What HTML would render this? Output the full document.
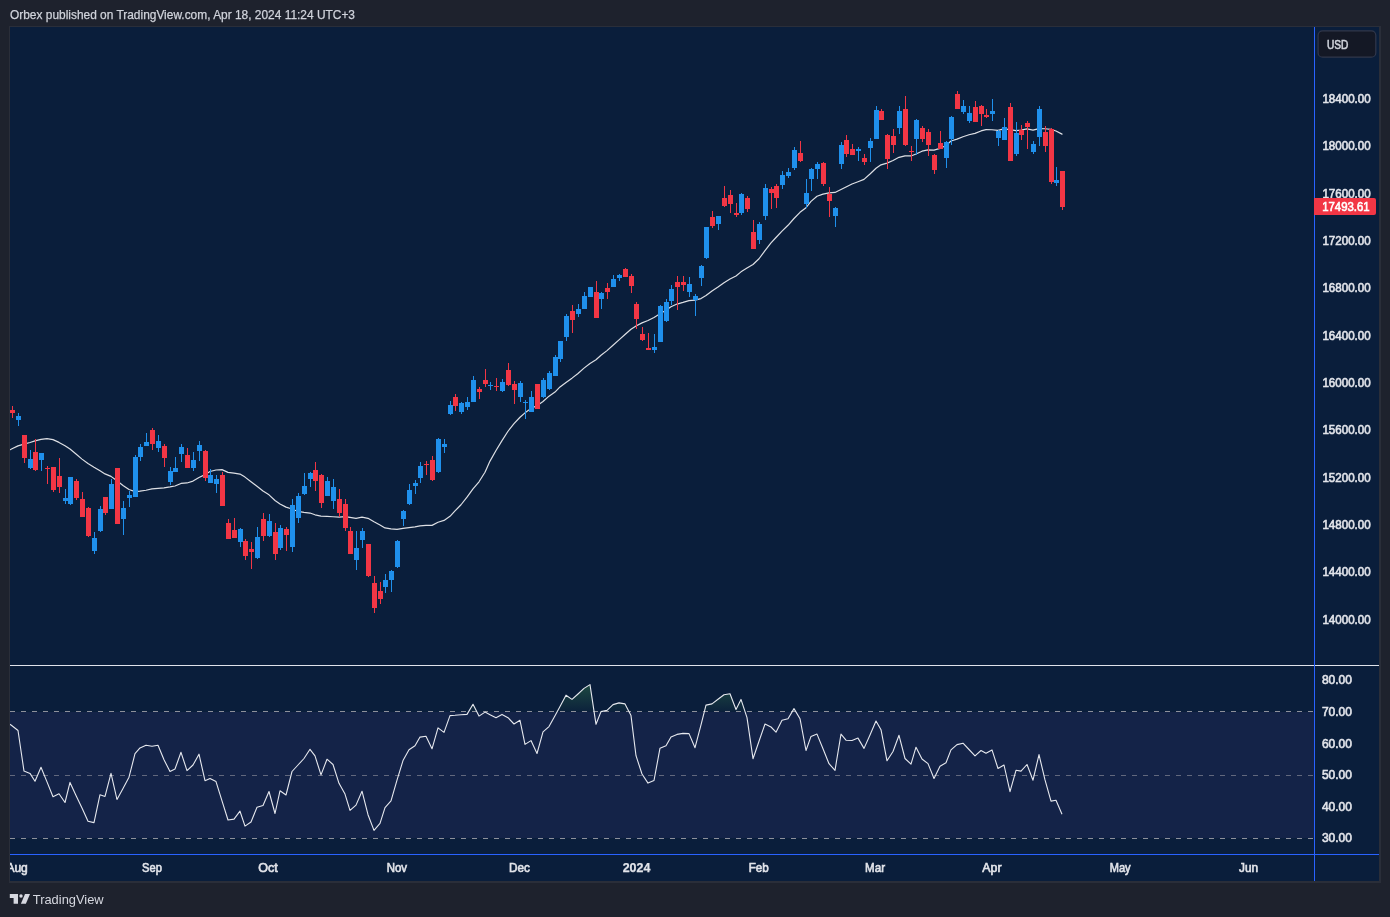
<!DOCTYPE html>
<html><head><meta charset="utf-8"><title>Chart</title>
<style>html,body{margin:0;padding:0;background:#1e222d;}body{width:1390px;height:917px;overflow:hidden;font-family:"Liberation Sans",sans-serif;}svg{display:block;}text{font-family:"Liberation Sans",sans-serif;}</style>
</head><body>
<svg width="1390" height="917" viewBox="0 0 1390 917">
<defs>
<linearGradient id="ob" gradientUnits="userSpaceOnUse" x1="0" y1="680" x2="0" y2="712"><stop offset="0" stop-color="#4caf50" stop-opacity="0.34"/><stop offset="1" stop-color="#4caf50" stop-opacity="0.02"/></linearGradient>
<clipPath id="above70"><rect x="10" y="666" width="1304" height="45.5"/></clipPath>
<clipPath id="main"><rect x="10" y="27" width="1304" height="638"/></clipPath>
<clipPath id="rsi"><rect x="10" y="666" width="1304" height="188"/></clipPath>
<clipPath id="taxis"><rect x="10" y="855" width="1304" height="26"/></clipPath>
<mask id="gm" maskUnits="userSpaceOnUse" x="0" y="0" width="1390" height="917"><rect x="0" y="0" width="1390" height="917" fill="#fff"/></mask>
</defs>
<g mask="url(#gm)">
<rect x="0" y="0" width="1390" height="917" fill="#1e222d"/>
<rect x="9" y="26" width="1372" height="857" fill="#2a2e39" shape-rendering="crispEdges"/>
<rect x="10" y="27" width="1369" height="854" fill="#0a1e3b" shape-rendering="crispEdges"/>
<text x="10" y="19" font-size="12.5" fill="#d0d3db" textLength="345" lengthAdjust="spacingAndGlyphs" stroke="#d0d3db" stroke-width="0.25">Orbex published on TradingView.com, Apr 18, 2024 11:24 UTC+3</text>
<rect x="10" y="712" width="1304" height="126" fill="#142348" shape-rendering="crispEdges"/>
<path d="M10,711.5 L10.0,724.3 L12.0,725.8 L18.0,730.5 L24.0,771.1 L30.0,773.4 L35.0,781.2 L41.0,767.3 L47.0,781.9 L53.0,796.7 L59.0,793.8 L65.0,802.5 L70.0,782.4 L76.0,795.4 L82.0,807.9 L88.0,821.2 L94.0,822.6 L100.0,794.7 L105.0,796.4 L111.0,773.4 L117.0,799.5 L123.0,788.6 L129.0,777.2 L135.0,753.7 L140.0,747.9 L146.0,745.3 L152.0,746.3 L158.0,745.3 L164.0,759.8 L170.0,771.5 L175.0,769.0 L181.0,752.3 L187.0,770.6 L193.0,765.0 L199.0,754.2 L205.0,780.7 L210.0,778.4 L216.0,781.6 L222.0,800.8 L228.0,820.0 L234.0,819.1 L240.0,811.2 L245.0,826.1 L251.0,822.0 L257.0,807.2 L263.0,805.5 L269.0,791.5 L275.0,813.5 L280.0,790.8 L286.0,795.0 L292.0,771.5 L298.0,765.0 L304.0,758.5 L310.0,749.3 L315.0,755.9 L321.0,774.9 L327.0,759.2 L333.0,764.5 L339.0,783.3 L345.0,794.1 L350.0,810.4 L356.0,805.1 L362.0,791.2 L368.0,814.7 L374.0,830.4 L380.0,823.4 L385.0,807.7 L391.0,800.8 L397.0,780.2 L403.0,760.6 L409.0,749.7 L415.0,745.8 L420.0,737.1 L426.0,736.2 L432.0,748.8 L438.0,727.9 L444.0,732.4 L450.0,715.6 L455.0,715.3 L461.0,714.8 L467.0,714.4 L473.0,704.3 L479.0,716.1 L485.0,712.1 L490.0,714.7 L496.0,717.7 L502.0,714.4 L508.0,717.7 L514.0,724.0 L520.0,720.3 L525.0,744.4 L531.0,740.6 L537.0,753.5 L543.0,731.8 L549.0,726.6 L555.0,715.8 L560.0,706.4 L566.0,695.2 L572.0,699.4 L578.0,694.0 L584.0,688.4 L590.0,684.6 L596.0,724.3 L601.0,711.6 L607.0,710.4 L613.0,704.6 L619.0,702.9 L625.0,703.9 L631.0,715.6 L636.0,755.7 L642.0,774.0 L648.0,783.1 L654.0,780.5 L660.0,748.2 L666.0,745.8 L671.0,736.9 L677.0,734.4 L683.0,733.4 L689.0,733.6 L695.0,747.7 L701.0,724.9 L706.0,705.1 L712.0,703.9 L718.0,699.3 L724.0,694.7 L730.0,693.8 L736.0,709.5 L741.0,699.4 L747.0,717.7 L753.0,758.7 L759.0,741.3 L765.0,724.0 L771.0,727.0 L776.0,732.2 L782.0,720.3 L788.0,718.7 L794.0,708.6 L800.0,718.7 L806.0,750.5 L811.0,736.4 L817.0,734.1 L823.0,748.7 L829.0,763.7 L835.0,770.4 L841.0,734.1 L846.0,740.2 L852.0,740.5 L858.0,738.1 L864.0,748.4 L870.0,735.0 L876.0,721.0 L881.0,729.7 L887.0,760.8 L893.0,751.5 L899.0,735.3 L905.0,758.5 L911.0,764.1 L916.0,747.2 L922.0,759.0 L928.0,763.6 L934.0,778.5 L940.0,766.3 L946.0,762.8 L951.0,749.9 L957.0,744.6 L963.0,743.2 L969.0,749.5 L975.0,755.8 L981.0,750.5 L986.0,753.2 L992.0,749.9 L998.0,768.5 L1004.0,765.0 L1010.0,791.6 L1016.0,770.3 L1021.0,771.1 L1027.0,764.5 L1033.0,780.2 L1039.0,754.6 L1045.0,779.9 L1051.0,801.1 L1056.0,800.3 L1062.0,814.2 L1062.0,711.5 Z" fill="url(#ob)" clip-path="url(#above70)"/>
<path d="M10,711.5 H1314" stroke="#8d909b" stroke-width="1" stroke-dasharray="5 6" fill="none" shape-rendering="crispEdges"/>
<path d="M10,775.5 H1314" stroke="#62687d" stroke-width="1" stroke-dasharray="5 6" fill="none" shape-rendering="crispEdges"/>
<path d="M10,838.5 H1314" stroke="#8d909b" stroke-width="1" stroke-dasharray="5 6" fill="none" shape-rendering="crispEdges"/>
<path d="M10.0,724.3 L12.0,725.8 L18.0,730.5 L24.0,771.1 L30.0,773.4 L35.0,781.2 L41.0,767.3 L47.0,781.9 L53.0,796.7 L59.0,793.8 L65.0,802.5 L70.0,782.4 L76.0,795.4 L82.0,807.9 L88.0,821.2 L94.0,822.6 L100.0,794.7 L105.0,796.4 L111.0,773.4 L117.0,799.5 L123.0,788.6 L129.0,777.2 L135.0,753.7 L140.0,747.9 L146.0,745.3 L152.0,746.3 L158.0,745.3 L164.0,759.8 L170.0,771.5 L175.0,769.0 L181.0,752.3 L187.0,770.6 L193.0,765.0 L199.0,754.2 L205.0,780.7 L210.0,778.4 L216.0,781.6 L222.0,800.8 L228.0,820.0 L234.0,819.1 L240.0,811.2 L245.0,826.1 L251.0,822.0 L257.0,807.2 L263.0,805.5 L269.0,791.5 L275.0,813.5 L280.0,790.8 L286.0,795.0 L292.0,771.5 L298.0,765.0 L304.0,758.5 L310.0,749.3 L315.0,755.9 L321.0,774.9 L327.0,759.2 L333.0,764.5 L339.0,783.3 L345.0,794.1 L350.0,810.4 L356.0,805.1 L362.0,791.2 L368.0,814.7 L374.0,830.4 L380.0,823.4 L385.0,807.7 L391.0,800.8 L397.0,780.2 L403.0,760.6 L409.0,749.7 L415.0,745.8 L420.0,737.1 L426.0,736.2 L432.0,748.8 L438.0,727.9 L444.0,732.4 L450.0,715.6 L455.0,715.3 L461.0,714.8 L467.0,714.4 L473.0,704.3 L479.0,716.1 L485.0,712.1 L490.0,714.7 L496.0,717.7 L502.0,714.4 L508.0,717.7 L514.0,724.0 L520.0,720.3 L525.0,744.4 L531.0,740.6 L537.0,753.5 L543.0,731.8 L549.0,726.6 L555.0,715.8 L560.0,706.4 L566.0,695.2 L572.0,699.4 L578.0,694.0 L584.0,688.4 L590.0,684.6 L596.0,724.3 L601.0,711.6 L607.0,710.4 L613.0,704.6 L619.0,702.9 L625.0,703.9 L631.0,715.6 L636.0,755.7 L642.0,774.0 L648.0,783.1 L654.0,780.5 L660.0,748.2 L666.0,745.8 L671.0,736.9 L677.0,734.4 L683.0,733.4 L689.0,733.6 L695.0,747.7 L701.0,724.9 L706.0,705.1 L712.0,703.9 L718.0,699.3 L724.0,694.7 L730.0,693.8 L736.0,709.5 L741.0,699.4 L747.0,717.7 L753.0,758.7 L759.0,741.3 L765.0,724.0 L771.0,727.0 L776.0,732.2 L782.0,720.3 L788.0,718.7 L794.0,708.6 L800.0,718.7 L806.0,750.5 L811.0,736.4 L817.0,734.1 L823.0,748.7 L829.0,763.7 L835.0,770.4 L841.0,734.1 L846.0,740.2 L852.0,740.5 L858.0,738.1 L864.0,748.4 L870.0,735.0 L876.0,721.0 L881.0,729.7 L887.0,760.8 L893.0,751.5 L899.0,735.3 L905.0,758.5 L911.0,764.1 L916.0,747.2 L922.0,759.0 L928.0,763.6 L934.0,778.5 L940.0,766.3 L946.0,762.8 L951.0,749.9 L957.0,744.6 L963.0,743.2 L969.0,749.5 L975.0,755.8 L981.0,750.5 L986.0,753.2 L992.0,749.9 L998.0,768.5 L1004.0,765.0 L1010.0,791.6 L1016.0,770.3 L1021.0,771.1 L1027.0,764.5 L1033.0,780.2 L1039.0,754.6 L1045.0,779.9 L1051.0,801.1 L1056.0,800.3 L1062.0,814.2" fill="none" stroke="#e6e8ee" stroke-width="1.1" stroke-linejoin="round" clip-path="url(#rsi)"/>
<path d="M10.0,449.80 L12.0,448.80 L18.0,445.85 L24.0,444.10 L30.0,442.49 L35.0,440.93 L41.0,439.34 L47.0,438.63 L53.0,439.61 L59.0,442.41 L65.0,445.79 L70.0,449.07 L76.0,453.93 L82.0,459.12 L88.0,463.52 L94.0,467.27 L100.0,470.75 L105.0,473.90 L111.0,476.37 L117.0,480.78 L123.0,485.40 L129.0,489.55 L135.0,491.60 L140.0,491.10 L146.0,490.25 L152.0,488.95 L158.0,488.35 L164.0,487.80 L170.0,486.90 L175.0,486.00 L181.0,483.45 L187.0,482.95 L193.0,481.10 L199.0,477.55 L205.0,474.65 L210.0,471.50 L216.0,470.00 L222.0,469.65 L228.0,472.35 L234.0,473.05 L240.0,474.10 L245.0,477.10 L251.0,481.80 L257.0,486.30 L263.0,490.95 L269.0,494.85 L275.0,500.45 L280.0,504.00 L286.0,507.15 L292.0,509.00 L298.0,511.45 L304.0,512.40 L310.0,513.05 L315.0,514.80 L321.0,516.05 L327.0,516.35 L333.0,516.75 L339.0,517.10 L345.0,516.55 L350.0,517.35 L356.0,518.30 L362.0,517.10 L368.0,518.30 L374.0,521.80 L380.0,524.95 L385.0,527.90 L391.0,528.80 L397.0,529.45 L403.0,528.30 L409.0,527.55 L415.0,526.90 L420.0,525.90 L426.0,525.45 L432.0,525.40 L438.0,522.25 L444.0,520.40 L450.0,516.30 L455.0,510.95 L461.0,504.75 L467.0,497.20 L473.0,488.80 L479.0,481.80 L485.0,472.20 L490.0,461.10 L496.0,450.50 L502.0,440.60 L508.0,431.25 L514.0,423.65 L520.0,417.25 L525.0,412.85 L531.0,408.55 L537.0,405.65 L543.0,401.45 L549.0,396.15 L555.0,392.05 L560.0,386.90 L566.0,382.45 L572.0,378.15 L578.0,373.45 L584.0,368.15 L590.0,363.50 L596.0,359.80 L601.0,355.30 L607.0,350.60 L613.0,345.25 L619.0,339.90 L625.0,334.50 L631.0,329.30 L636.0,326.05 L642.0,322.90 L648.0,320.50 L654.0,317.45 L660.0,313.75 L666.0,310.20 L671.0,306.80 L677.0,304.05 L683.0,302.45 L689.0,300.70 L695.0,300.05 L701.0,298.55 L706.0,295.55 L712.0,290.95 L718.0,287.10 L724.0,282.80 L730.0,279.00 L736.0,275.95 L741.0,271.85 L747.0,268.00 L753.0,264.50 L759.0,258.75 L765.0,250.70 L771.0,242.95 L776.0,237.50 L782.0,231.15 L788.0,225.30 L794.0,218.50 L800.0,212.30 L806.0,207.75 L811.0,201.40 L817.0,196.30 L823.0,194.10 L829.0,192.85 L835.0,192.45 L841.0,189.45 L846.0,186.95 L852.0,183.95 L858.0,181.70 L864.0,179.35 L870.0,174.00 L876.0,168.30 L881.0,164.85 L887.0,163.15 L893.0,160.50 L899.0,157.30 L905.0,155.90 L911.0,155.95 L916.0,153.95 L922.0,151.20 L928.0,149.95 L934.0,150.20 L940.0,148.45 L946.0,145.55 L951.0,141.00 L957.0,139.15 L963.0,136.80 L969.0,134.75 L975.0,133.35 L981.0,130.95 L986.0,129.70 L992.0,129.75 L998.0,130.35 L1004.0,128.80 L1010.0,129.60 L1016.0,130.70 L1021.0,130.20 L1027.0,128.95 L1033.0,130.15 L1039.0,128.70 L1045.0,128.75 L1051.0,129.35 L1056.0,130.95 L1062.0,134.15" fill="none" stroke="#dddfe4" stroke-width="1.2" stroke-linejoin="round" stroke-linecap="round" clip-path="url(#main)"/>
<g shape-rendering="crispEdges" clip-path="url(#main)">
<rect x="12" y="406" width="1" height="12" fill="#f23645"/>
<rect x="10" y="410" width="5" height="3" fill="#f23645"/>
<rect x="18" y="413" width="1" height="13" fill="#1f90ec"/>
<rect x="16" y="416" width="5" height="4" fill="#1f90ec"/>
<rect x="24" y="435" width="1" height="28" fill="#f23645"/>
<rect x="22" y="435" width="5" height="23" fill="#f23645"/>
<rect x="30" y="450" width="1" height="19" fill="#1f90ec"/>
<rect x="28" y="459" width="5" height="9" fill="#1f90ec"/>
<rect x="35" y="439" width="1" height="32" fill="#f23645"/>
<rect x="33" y="452" width="5" height="18" fill="#f23645"/>
<rect x="41" y="453" width="1" height="18" fill="#1f90ec"/>
<rect x="39" y="453" width="5" height="7" fill="#1f90ec"/>
<rect x="47" y="466" width="1" height="18" fill="#f23645"/>
<rect x="45" y="468" width="5" height="1" fill="#f23645"/>
<rect x="53" y="467" width="1" height="25" fill="#f23645"/>
<rect x="51" y="467" width="5" height="23" fill="#f23645"/>
<rect x="59" y="458" width="1" height="35" fill="#f23645"/>
<rect x="57" y="476" width="5" height="11" fill="#f23645"/>
<rect x="65" y="489" width="1" height="15" fill="#1f90ec"/>
<rect x="63" y="498" width="5" height="3" fill="#1f90ec"/>
<rect x="70" y="477" width="1" height="28" fill="#1f90ec"/>
<rect x="68" y="477" width="5" height="27" fill="#1f90ec"/>
<rect x="76" y="479" width="1" height="21" fill="#f23645"/>
<rect x="74" y="481" width="5" height="17" fill="#f23645"/>
<rect x="82" y="492" width="1" height="25" fill="#f23645"/>
<rect x="80" y="499" width="5" height="18" fill="#f23645"/>
<rect x="88" y="507" width="1" height="30" fill="#f23645"/>
<rect x="86" y="508" width="5" height="28" fill="#f23645"/>
<rect x="94" y="532" width="1" height="22" fill="#1f90ec"/>
<rect x="92" y="538" width="5" height="13" fill="#1f90ec"/>
<rect x="100" y="506" width="1" height="26" fill="#1f90ec"/>
<rect x="98" y="509" width="5" height="22" fill="#1f90ec"/>
<rect x="105" y="497" width="1" height="18" fill="#f23645"/>
<rect x="103" y="497" width="5" height="16" fill="#f23645"/>
<rect x="111" y="479" width="1" height="30" fill="#1f90ec"/>
<rect x="109" y="484" width="5" height="25" fill="#1f90ec"/>
<rect x="117" y="468" width="1" height="56" fill="#f23645"/>
<rect x="115" y="468" width="5" height="56" fill="#f23645"/>
<rect x="123" y="501" width="1" height="34" fill="#1f90ec"/>
<rect x="121" y="508" width="5" height="11" fill="#1f90ec"/>
<rect x="129" y="491" width="1" height="16" fill="#1f90ec"/>
<rect x="127" y="495" width="5" height="3" fill="#1f90ec"/>
<rect x="135" y="455" width="1" height="42" fill="#1f90ec"/>
<rect x="133" y="457" width="5" height="40" fill="#1f90ec"/>
<rect x="140" y="444" width="1" height="17" fill="#1f90ec"/>
<rect x="138" y="447" width="5" height="10" fill="#1f90ec"/>
<rect x="146" y="433" width="1" height="13" fill="#1f90ec"/>
<rect x="144" y="442" width="5" height="4" fill="#1f90ec"/>
<rect x="152" y="428" width="1" height="22" fill="#f23645"/>
<rect x="150" y="430" width="5" height="14" fill="#f23645"/>
<rect x="158" y="435" width="1" height="17" fill="#1f90ec"/>
<rect x="156" y="441" width="5" height="7" fill="#1f90ec"/>
<rect x="164" y="444" width="1" height="23" fill="#f23645"/>
<rect x="162" y="446" width="5" height="12" fill="#f23645"/>
<rect x="170" y="467" width="1" height="18" fill="#1f90ec"/>
<rect x="168" y="471" width="5" height="11" fill="#1f90ec"/>
<rect x="175" y="457" width="1" height="15" fill="#1f90ec"/>
<rect x="173" y="468" width="5" height="4" fill="#1f90ec"/>
<rect x="181" y="444" width="1" height="18" fill="#1f90ec"/>
<rect x="179" y="447" width="5" height="7" fill="#1f90ec"/>
<rect x="187" y="448" width="1" height="20" fill="#f23645"/>
<rect x="185" y="455" width="5" height="13" fill="#f23645"/>
<rect x="193" y="452" width="1" height="19" fill="#1f90ec"/>
<rect x="191" y="460" width="5" height="8" fill="#1f90ec"/>
<rect x="199" y="441" width="1" height="20" fill="#1f90ec"/>
<rect x="197" y="445" width="5" height="6" fill="#1f90ec"/>
<rect x="205" y="450" width="1" height="31" fill="#f23645"/>
<rect x="203" y="451" width="5" height="27" fill="#f23645"/>
<rect x="210" y="469" width="1" height="14" fill="#1f90ec"/>
<rect x="208" y="475" width="5" height="8" fill="#1f90ec"/>
<rect x="216" y="475" width="1" height="18" fill="#1f90ec"/>
<rect x="214" y="479" width="5" height="5" fill="#1f90ec"/>
<rect x="222" y="472" width="1" height="34" fill="#f23645"/>
<rect x="220" y="475" width="5" height="31" fill="#f23645"/>
<rect x="228" y="519" width="1" height="20" fill="#f23645"/>
<rect x="226" y="523" width="5" height="16" fill="#f23645"/>
<rect x="234" y="518" width="1" height="20" fill="#f23645"/>
<rect x="232" y="530" width="5" height="8" fill="#f23645"/>
<rect x="240" y="528" width="1" height="19" fill="#1f90ec"/>
<rect x="238" y="529" width="5" height="13" fill="#1f90ec"/>
<rect x="245" y="539" width="1" height="21" fill="#f23645"/>
<rect x="243" y="541" width="5" height="15" fill="#f23645"/>
<rect x="251" y="542" width="1" height="27" fill="#f23645"/>
<rect x="249" y="549" width="5" height="3" fill="#f23645"/>
<rect x="257" y="527" width="1" height="32" fill="#1f90ec"/>
<rect x="255" y="537" width="5" height="21" fill="#1f90ec"/>
<rect x="263" y="513" width="1" height="28" fill="#f23645"/>
<rect x="261" y="519" width="5" height="17" fill="#f23645"/>
<rect x="269" y="514" width="1" height="23" fill="#1f90ec"/>
<rect x="267" y="521" width="5" height="15" fill="#1f90ec"/>
<rect x="275" y="523" width="1" height="37" fill="#f23645"/>
<rect x="273" y="532" width="5" height="22" fill="#f23645"/>
<rect x="280" y="525" width="1" height="25" fill="#1f90ec"/>
<rect x="278" y="528" width="5" height="20" fill="#1f90ec"/>
<rect x="286" y="527" width="1" height="24" fill="#f23645"/>
<rect x="284" y="529" width="5" height="6" fill="#f23645"/>
<rect x="292" y="499" width="1" height="53" fill="#1f90ec"/>
<rect x="290" y="505" width="5" height="42" fill="#1f90ec"/>
<rect x="298" y="493" width="1" height="30" fill="#1f90ec"/>
<rect x="296" y="496" width="5" height="22" fill="#1f90ec"/>
<rect x="304" y="473" width="1" height="22" fill="#1f90ec"/>
<rect x="302" y="486" width="5" height="8" fill="#1f90ec"/>
<rect x="310" y="472" width="1" height="15" fill="#1f90ec"/>
<rect x="308" y="473" width="5" height="6" fill="#1f90ec"/>
<rect x="315" y="462" width="1" height="29" fill="#f23645"/>
<rect x="313" y="470" width="5" height="11" fill="#f23645"/>
<rect x="321" y="474" width="1" height="34" fill="#f23645"/>
<rect x="319" y="475" width="5" height="28" fill="#f23645"/>
<rect x="327" y="477" width="1" height="19" fill="#1f90ec"/>
<rect x="325" y="481" width="5" height="15" fill="#1f90ec"/>
<rect x="333" y="479" width="1" height="30" fill="#1f90ec"/>
<rect x="331" y="487" width="5" height="14" fill="#1f90ec"/>
<rect x="339" y="489" width="1" height="28" fill="#f23645"/>
<rect x="337" y="499" width="5" height="14" fill="#f23645"/>
<rect x="345" y="499" width="1" height="32" fill="#f23645"/>
<rect x="343" y="504" width="5" height="24" fill="#f23645"/>
<rect x="350" y="527" width="1" height="27" fill="#f23645"/>
<rect x="348" y="531" width="5" height="23" fill="#f23645"/>
<rect x="356" y="531" width="1" height="39" fill="#1f90ec"/>
<rect x="354" y="548" width="5" height="12" fill="#1f90ec"/>
<rect x="362" y="528" width="1" height="20" fill="#1f90ec"/>
<rect x="360" y="531" width="5" height="9" fill="#1f90ec"/>
<rect x="368" y="544" width="1" height="33" fill="#f23645"/>
<rect x="366" y="544" width="5" height="32" fill="#f23645"/>
<rect x="374" y="576" width="1" height="37" fill="#f23645"/>
<rect x="372" y="583" width="5" height="25" fill="#f23645"/>
<rect x="380" y="582" width="1" height="22" fill="#f23645"/>
<rect x="378" y="591" width="5" height="8" fill="#f23645"/>
<rect x="385" y="574" width="1" height="19" fill="#1f90ec"/>
<rect x="383" y="580" width="5" height="7" fill="#1f90ec"/>
<rect x="391" y="570" width="1" height="22" fill="#1f90ec"/>
<rect x="389" y="571" width="5" height="9" fill="#1f90ec"/>
<rect x="397" y="540" width="1" height="28" fill="#1f90ec"/>
<rect x="395" y="541" width="5" height="26" fill="#1f90ec"/>
<rect x="403" y="510" width="1" height="16" fill="#1f90ec"/>
<rect x="401" y="511" width="5" height="8" fill="#1f90ec"/>
<rect x="409" y="484" width="1" height="21" fill="#1f90ec"/>
<rect x="407" y="490" width="5" height="14" fill="#1f90ec"/>
<rect x="415" y="480" width="1" height="14" fill="#1f90ec"/>
<rect x="413" y="483" width="5" height="3" fill="#1f90ec"/>
<rect x="420" y="462" width="1" height="21" fill="#1f90ec"/>
<rect x="418" y="466" width="5" height="12" fill="#1f90ec"/>
<rect x="426" y="461" width="1" height="14" fill="#f23645"/>
<rect x="424" y="464" width="5" height="1" fill="#f23645"/>
<rect x="432" y="456" width="1" height="25" fill="#f23645"/>
<rect x="430" y="460" width="5" height="20" fill="#f23645"/>
<rect x="438" y="438" width="1" height="35" fill="#1f90ec"/>
<rect x="436" y="439" width="5" height="33" fill="#1f90ec"/>
<rect x="444" y="439" width="1" height="14" fill="#1f90ec"/>
<rect x="442" y="444" width="5" height="3" fill="#1f90ec"/>
<rect x="450" y="401" width="1" height="14" fill="#1f90ec"/>
<rect x="448" y="405" width="5" height="9" fill="#1f90ec"/>
<rect x="455" y="394" width="1" height="17" fill="#f23645"/>
<rect x="453" y="397" width="5" height="9" fill="#f23645"/>
<rect x="461" y="402" width="1" height="12" fill="#1f90ec"/>
<rect x="459" y="403" width="5" height="9" fill="#1f90ec"/>
<rect x="467" y="397" width="1" height="13" fill="#1f90ec"/>
<rect x="465" y="402" width="5" height="5" fill="#1f90ec"/>
<rect x="473" y="376" width="1" height="26" fill="#1f90ec"/>
<rect x="471" y="380" width="5" height="22" fill="#1f90ec"/>
<rect x="479" y="387" width="1" height="12" fill="#f23645"/>
<rect x="477" y="389" width="5" height="3" fill="#f23645"/>
<rect x="485" y="369" width="1" height="18" fill="#f23645"/>
<rect x="483" y="380" width="5" height="4" fill="#f23645"/>
<rect x="490" y="382" width="1" height="8" fill="#1f90ec"/>
<rect x="488" y="385" width="5" height="1" fill="#1f90ec"/>
<rect x="496" y="378" width="1" height="13" fill="#f23645"/>
<rect x="494" y="386" width="5" height="1" fill="#f23645"/>
<rect x="502" y="379" width="1" height="13" fill="#1f90ec"/>
<rect x="500" y="382" width="5" height="9" fill="#1f90ec"/>
<rect x="508" y="363" width="1" height="23" fill="#f23645"/>
<rect x="506" y="370" width="5" height="15" fill="#f23645"/>
<rect x="514" y="381" width="1" height="23" fill="#f23645"/>
<rect x="512" y="384" width="5" height="6" fill="#f23645"/>
<rect x="520" y="381" width="1" height="21" fill="#1f90ec"/>
<rect x="518" y="383" width="5" height="14" fill="#1f90ec"/>
<rect x="525" y="400" width="1" height="19" fill="#1f90ec"/>
<rect x="523" y="402" width="5" height="1" fill="#1f90ec"/>
<rect x="531" y="391" width="1" height="21" fill="#1f90ec"/>
<rect x="529" y="397" width="5" height="15" fill="#1f90ec"/>
<rect x="537" y="384" width="1" height="25" fill="#f23645"/>
<rect x="535" y="384" width="5" height="25" fill="#f23645"/>
<rect x="543" y="378" width="1" height="20" fill="#1f90ec"/>
<rect x="541" y="380" width="5" height="17" fill="#1f90ec"/>
<rect x="549" y="371" width="1" height="19" fill="#1f90ec"/>
<rect x="547" y="373" width="5" height="16" fill="#1f90ec"/>
<rect x="555" y="355" width="1" height="21" fill="#1f90ec"/>
<rect x="553" y="357" width="5" height="19" fill="#1f90ec"/>
<rect x="560" y="341" width="1" height="21" fill="#1f90ec"/>
<rect x="558" y="341" width="5" height="18" fill="#1f90ec"/>
<rect x="566" y="314" width="1" height="27" fill="#1f90ec"/>
<rect x="564" y="316" width="5" height="21" fill="#1f90ec"/>
<rect x="572" y="305" width="1" height="28" fill="#f23645"/>
<rect x="570" y="311" width="5" height="9" fill="#f23645"/>
<rect x="578" y="304" width="1" height="13" fill="#1f90ec"/>
<rect x="576" y="309" width="5" height="5" fill="#1f90ec"/>
<rect x="584" y="292" width="1" height="17" fill="#1f90ec"/>
<rect x="582" y="296" width="5" height="13" fill="#1f90ec"/>
<rect x="590" y="287" width="1" height="10" fill="#1f90ec"/>
<rect x="588" y="287" width="5" height="10" fill="#1f90ec"/>
<rect x="596" y="281" width="1" height="37" fill="#f23645"/>
<rect x="594" y="292" width="5" height="26" fill="#f23645"/>
<rect x="601" y="292" width="1" height="17" fill="#1f90ec"/>
<rect x="599" y="293" width="5" height="6" fill="#1f90ec"/>
<rect x="607" y="283" width="1" height="16" fill="#f23645"/>
<rect x="605" y="288" width="5" height="4" fill="#f23645"/>
<rect x="613" y="275" width="1" height="12" fill="#1f90ec"/>
<rect x="611" y="279" width="5" height="8" fill="#1f90ec"/>
<rect x="619" y="274" width="1" height="7" fill="#1f90ec"/>
<rect x="617" y="275" width="5" height="3" fill="#1f90ec"/>
<rect x="625" y="268" width="1" height="9" fill="#f23645"/>
<rect x="623" y="269" width="5" height="8" fill="#f23645"/>
<rect x="631" y="274" width="1" height="19" fill="#f23645"/>
<rect x="629" y="276" width="5" height="10" fill="#f23645"/>
<rect x="636" y="302" width="1" height="27" fill="#f23645"/>
<rect x="634" y="304" width="5" height="15" fill="#f23645"/>
<rect x="642" y="327" width="1" height="14" fill="#f23645"/>
<rect x="640" y="334" width="5" height="6" fill="#f23645"/>
<rect x="648" y="333" width="1" height="17" fill="#f23645"/>
<rect x="646" y="348" width="5" height="2" fill="#f23645"/>
<rect x="654" y="334" width="1" height="19" fill="#1f90ec"/>
<rect x="652" y="347" width="5" height="3" fill="#1f90ec"/>
<rect x="660" y="305" width="1" height="37" fill="#1f90ec"/>
<rect x="658" y="306" width="5" height="36" fill="#1f90ec"/>
<rect x="666" y="299" width="1" height="23" fill="#1f90ec"/>
<rect x="664" y="302" width="5" height="19" fill="#1f90ec"/>
<rect x="671" y="285" width="1" height="20" fill="#1f90ec"/>
<rect x="669" y="289" width="5" height="12" fill="#1f90ec"/>
<rect x="677" y="276" width="1" height="34" fill="#f23645"/>
<rect x="675" y="282" width="5" height="5" fill="#f23645"/>
<rect x="683" y="276" width="1" height="15" fill="#f23645"/>
<rect x="681" y="282" width="5" height="3" fill="#f23645"/>
<rect x="689" y="277" width="1" height="20" fill="#1f90ec"/>
<rect x="687" y="284" width="5" height="8" fill="#1f90ec"/>
<rect x="695" y="294" width="1" height="22" fill="#1f90ec"/>
<rect x="693" y="296" width="5" height="4" fill="#1f90ec"/>
<rect x="701" y="265" width="1" height="21" fill="#1f90ec"/>
<rect x="699" y="266" width="5" height="12" fill="#1f90ec"/>
<rect x="706" y="227" width="1" height="32" fill="#1f90ec"/>
<rect x="704" y="227" width="5" height="31" fill="#1f90ec"/>
<rect x="712" y="211" width="1" height="17" fill="#f23645"/>
<rect x="710" y="217" width="5" height="9" fill="#f23645"/>
<rect x="718" y="216" width="1" height="14" fill="#1f90ec"/>
<rect x="716" y="216" width="5" height="8" fill="#1f90ec"/>
<rect x="724" y="186" width="1" height="21" fill="#f23645"/>
<rect x="722" y="198" width="5" height="8" fill="#f23645"/>
<rect x="730" y="190" width="1" height="23" fill="#f23645"/>
<rect x="728" y="195" width="5" height="9" fill="#f23645"/>
<rect x="736" y="203" width="1" height="14" fill="#f23645"/>
<rect x="734" y="213" width="5" height="2" fill="#f23645"/>
<rect x="741" y="193" width="1" height="22" fill="#1f90ec"/>
<rect x="739" y="194" width="5" height="19" fill="#1f90ec"/>
<rect x="747" y="196" width="1" height="16" fill="#f23645"/>
<rect x="745" y="198" width="5" height="11" fill="#f23645"/>
<rect x="753" y="220" width="1" height="29" fill="#f23645"/>
<rect x="751" y="232" width="5" height="17" fill="#f23645"/>
<rect x="759" y="222" width="1" height="22" fill="#1f90ec"/>
<rect x="757" y="224" width="5" height="16" fill="#1f90ec"/>
<rect x="765" y="184" width="1" height="36" fill="#1f90ec"/>
<rect x="763" y="188" width="5" height="28" fill="#1f90ec"/>
<rect x="771" y="187" width="1" height="22" fill="#f23645"/>
<rect x="769" y="189" width="5" height="4" fill="#f23645"/>
<rect x="776" y="184" width="1" height="24" fill="#f23645"/>
<rect x="774" y="186" width="5" height="12" fill="#f23645"/>
<rect x="782" y="171" width="1" height="18" fill="#1f90ec"/>
<rect x="780" y="175" width="5" height="10" fill="#1f90ec"/>
<rect x="788" y="168" width="1" height="10" fill="#1f90ec"/>
<rect x="786" y="172" width="5" height="4" fill="#1f90ec"/>
<rect x="794" y="147" width="1" height="23" fill="#1f90ec"/>
<rect x="792" y="150" width="5" height="18" fill="#1f90ec"/>
<rect x="800" y="141" width="1" height="21" fill="#f23645"/>
<rect x="798" y="153" width="5" height="8" fill="#f23645"/>
<rect x="806" y="179" width="1" height="29" fill="#1f90ec"/>
<rect x="804" y="193" width="5" height="11" fill="#1f90ec"/>
<rect x="811" y="168" width="1" height="23" fill="#1f90ec"/>
<rect x="809" y="169" width="5" height="10" fill="#1f90ec"/>
<rect x="817" y="162" width="1" height="17" fill="#1f90ec"/>
<rect x="815" y="164" width="5" height="5" fill="#1f90ec"/>
<rect x="823" y="162" width="1" height="24" fill="#f23645"/>
<rect x="821" y="163" width="5" height="21" fill="#f23645"/>
<rect x="829" y="187" width="1" height="30" fill="#f23645"/>
<rect x="827" y="194" width="5" height="7" fill="#f23645"/>
<rect x="835" y="207" width="1" height="20" fill="#1f90ec"/>
<rect x="833" y="208" width="5" height="8" fill="#1f90ec"/>
<rect x="841" y="142" width="1" height="27" fill="#1f90ec"/>
<rect x="839" y="145" width="5" height="19" fill="#1f90ec"/>
<rect x="846" y="135" width="1" height="22" fill="#f23645"/>
<rect x="844" y="140" width="5" height="14" fill="#f23645"/>
<rect x="852" y="144" width="1" height="11" fill="#f23645"/>
<rect x="850" y="149" width="5" height="6" fill="#f23645"/>
<rect x="858" y="147" width="1" height="14" fill="#1f90ec"/>
<rect x="856" y="149" width="5" height="2" fill="#1f90ec"/>
<rect x="864" y="154" width="1" height="11" fill="#f23645"/>
<rect x="862" y="158" width="5" height="4" fill="#f23645"/>
<rect x="870" y="138" width="1" height="24" fill="#1f90ec"/>
<rect x="868" y="141" width="5" height="7" fill="#1f90ec"/>
<rect x="876" y="106" width="1" height="33" fill="#1f90ec"/>
<rect x="874" y="110" width="5" height="29" fill="#1f90ec"/>
<rect x="881" y="109" width="1" height="11" fill="#f23645"/>
<rect x="879" y="111" width="5" height="9" fill="#f23645"/>
<rect x="887" y="134" width="1" height="35" fill="#f23645"/>
<rect x="885" y="135" width="5" height="24" fill="#f23645"/>
<rect x="893" y="129" width="1" height="24" fill="#f23645"/>
<rect x="891" y="136" width="5" height="9" fill="#f23645"/>
<rect x="899" y="106" width="1" height="28" fill="#1f90ec"/>
<rect x="897" y="111" width="5" height="17" fill="#1f90ec"/>
<rect x="905" y="96" width="1" height="50" fill="#f23645"/>
<rect x="903" y="109" width="5" height="36" fill="#f23645"/>
<rect x="911" y="146" width="1" height="15" fill="#f23645"/>
<rect x="909" y="151" width="5" height="1" fill="#f23645"/>
<rect x="916" y="119" width="1" height="36" fill="#1f90ec"/>
<rect x="914" y="120" width="5" height="19" fill="#1f90ec"/>
<rect x="922" y="126" width="1" height="16" fill="#f23645"/>
<rect x="920" y="128" width="5" height="11" fill="#f23645"/>
<rect x="928" y="129" width="1" height="27" fill="#f23645"/>
<rect x="926" y="132" width="5" height="13" fill="#f23645"/>
<rect x="934" y="154" width="1" height="20" fill="#f23645"/>
<rect x="932" y="155" width="5" height="15" fill="#f23645"/>
<rect x="940" y="131" width="1" height="18" fill="#f23645"/>
<rect x="938" y="143" width="5" height="6" fill="#f23645"/>
<rect x="946" y="141" width="1" height="27" fill="#1f90ec"/>
<rect x="944" y="142" width="5" height="16" fill="#1f90ec"/>
<rect x="951" y="116" width="1" height="29" fill="#1f90ec"/>
<rect x="949" y="117" width="5" height="22" fill="#1f90ec"/>
<rect x="957" y="91" width="1" height="18" fill="#f23645"/>
<rect x="955" y="94" width="5" height="15" fill="#f23645"/>
<rect x="963" y="100" width="1" height="14" fill="#1f90ec"/>
<rect x="961" y="106" width="5" height="6" fill="#1f90ec"/>
<rect x="969" y="106" width="1" height="17" fill="#1f90ec"/>
<rect x="967" y="113" width="5" height="8" fill="#1f90ec"/>
<rect x="975" y="101" width="1" height="21" fill="#f23645"/>
<rect x="973" y="107" width="5" height="15" fill="#f23645"/>
<rect x="981" y="105" width="1" height="21" fill="#f23645"/>
<rect x="979" y="106" width="5" height="8" fill="#f23645"/>
<rect x="986" y="109" width="1" height="9" fill="#f23645"/>
<rect x="984" y="115" width="5" height="2" fill="#f23645"/>
<rect x="992" y="99" width="1" height="22" fill="#1f90ec"/>
<rect x="990" y="111" width="5" height="3" fill="#1f90ec"/>
<rect x="998" y="130" width="1" height="16" fill="#1f90ec"/>
<rect x="996" y="131" width="5" height="7" fill="#1f90ec"/>
<rect x="1004" y="118" width="1" height="22" fill="#1f90ec"/>
<rect x="1002" y="127" width="5" height="13" fill="#1f90ec"/>
<rect x="1010" y="103" width="1" height="58" fill="#f23645"/>
<rect x="1008" y="107" width="5" height="54" fill="#f23645"/>
<rect x="1016" y="122" width="1" height="34" fill="#1f90ec"/>
<rect x="1014" y="133" width="5" height="21" fill="#1f90ec"/>
<rect x="1021" y="125" width="1" height="15" fill="#f23645"/>
<rect x="1019" y="130" width="5" height="5" fill="#f23645"/>
<rect x="1027" y="121" width="1" height="28" fill="#f23645"/>
<rect x="1025" y="123" width="5" height="4" fill="#f23645"/>
<rect x="1033" y="141" width="1" height="13" fill="#1f90ec"/>
<rect x="1031" y="144" width="5" height="8" fill="#1f90ec"/>
<rect x="1039" y="106" width="1" height="40" fill="#1f90ec"/>
<rect x="1037" y="109" width="5" height="28" fill="#1f90ec"/>
<rect x="1045" y="126" width="1" height="26" fill="#f23645"/>
<rect x="1043" y="132" width="5" height="14" fill="#f23645"/>
<rect x="1051" y="128" width="1" height="56" fill="#f23645"/>
<rect x="1049" y="129" width="5" height="53" fill="#f23645"/>
<rect x="1056" y="167" width="1" height="19" fill="#1f90ec"/>
<rect x="1054" y="180" width="5" height="3" fill="#1f90ec"/>
<rect x="1062" y="171" width="1" height="39" fill="#f23645"/>
<rect x="1060" y="171" width="5" height="36" fill="#f23645"/>
</g>
<rect x="10" y="665" width="1369" height="1" fill="#e0e3eb" shape-rendering="crispEdges"/>
<rect x="1314" y="27" width="1" height="854" fill="#2962ff" shape-rendering="crispEdges"/>
<rect x="10" y="854" width="1369" height="1" fill="#2962ff" shape-rendering="crispEdges"/>
<text x="1322.4" y="103.1" font-size="12" fill="#e2e4ea" textLength="48.3" lengthAdjust="spacingAndGlyphs" stroke="#e2e4ea" stroke-width="0.6">18400.00</text>
<text x="1322.4" y="150.4" font-size="12" fill="#e2e4ea" textLength="48.3" lengthAdjust="spacingAndGlyphs" stroke="#e2e4ea" stroke-width="0.6">18000.00</text>
<text x="1322.4" y="197.8" font-size="12" fill="#e2e4ea" textLength="48.3" lengthAdjust="spacingAndGlyphs" stroke="#e2e4ea" stroke-width="0.6">17600.00</text>
<text x="1322.4" y="245.1" font-size="12" fill="#e2e4ea" textLength="48.3" lengthAdjust="spacingAndGlyphs" stroke="#e2e4ea" stroke-width="0.6">17200.00</text>
<text x="1322.4" y="292.4" font-size="12" fill="#e2e4ea" textLength="48.3" lengthAdjust="spacingAndGlyphs" stroke="#e2e4ea" stroke-width="0.6">16800.00</text>
<text x="1322.4" y="339.8" font-size="12" fill="#e2e4ea" textLength="48.3" lengthAdjust="spacingAndGlyphs" stroke="#e2e4ea" stroke-width="0.6">16400.00</text>
<text x="1322.4" y="387.1" font-size="12" fill="#e2e4ea" textLength="48.3" lengthAdjust="spacingAndGlyphs" stroke="#e2e4ea" stroke-width="0.6">16000.00</text>
<text x="1322.4" y="434.4" font-size="12" fill="#e2e4ea" textLength="48.3" lengthAdjust="spacingAndGlyphs" stroke="#e2e4ea" stroke-width="0.6">15600.00</text>
<text x="1322.4" y="481.8" font-size="12" fill="#e2e4ea" textLength="48.3" lengthAdjust="spacingAndGlyphs" stroke="#e2e4ea" stroke-width="0.6">15200.00</text>
<text x="1322.4" y="529.1" font-size="12" fill="#e2e4ea" textLength="48.3" lengthAdjust="spacingAndGlyphs" stroke="#e2e4ea" stroke-width="0.6">14800.00</text>
<text x="1322.4" y="576.4" font-size="12" fill="#e2e4ea" textLength="48.3" lengthAdjust="spacingAndGlyphs" stroke="#e2e4ea" stroke-width="0.6">14400.00</text>
<text x="1322.4" y="623.8" font-size="12" fill="#e2e4ea" textLength="48.3" lengthAdjust="spacingAndGlyphs" stroke="#e2e4ea" stroke-width="0.6">14000.00</text>
<text x="1321.9" y="684.3" font-size="12" fill="#e2e4ea" textLength="30" lengthAdjust="spacingAndGlyphs" stroke="#e2e4ea" stroke-width="0.6">80.00</text>
<text x="1321.9" y="716.0" font-size="12" fill="#e2e4ea" textLength="30" lengthAdjust="spacingAndGlyphs" stroke="#e2e4ea" stroke-width="0.6">70.00</text>
<text x="1321.9" y="747.7" font-size="12" fill="#e2e4ea" textLength="30" lengthAdjust="spacingAndGlyphs" stroke="#e2e4ea" stroke-width="0.6">60.00</text>
<text x="1321.9" y="779.3" font-size="12" fill="#e2e4ea" textLength="30" lengthAdjust="spacingAndGlyphs" stroke="#e2e4ea" stroke-width="0.6">50.00</text>
<text x="1321.9" y="811.2" font-size="12" fill="#e2e4ea" textLength="30" lengthAdjust="spacingAndGlyphs" stroke="#e2e4ea" stroke-width="0.6">40.00</text>
<text x="1321.9" y="842.3" font-size="12" fill="#e2e4ea" textLength="30" lengthAdjust="spacingAndGlyphs" stroke="#e2e4ea" stroke-width="0.6">30.00</text>
<path d="M1314,198 H1374 a2,2 0 0 1 2,2 V213 a2,2 0 0 1 -2,2 H1314 Z" fill="#f23645"/>
<text x="1322.2" y="210.8" font-size="12" fill="#ffffff" textLength="47.5" lengthAdjust="spacingAndGlyphs" stroke="#ffffff" stroke-width="0.6">17493.61</text>
<rect x="1318.1" y="30.8" width="57.7" height="26.4" rx="4.5" ry="4.5" fill="#141825" stroke="#31374b" stroke-width="1.2"/>
<text x="1326.9" y="48.9" font-size="12" fill="#cfd2da" textLength="21.4" lengthAdjust="spacingAndGlyphs" stroke="#cfd2da" stroke-width="0.6">USD</text>
<g clip-path="url(#taxis)">
<text x="6.40" y="872.2" font-size="12" fill="#e2e4ea" textLength="21.40" lengthAdjust="spacingAndGlyphs" stroke="#e2e4ea" stroke-width="0.6">Aug</text>
<text x="142.10" y="872.2" font-size="12" fill="#e2e4ea" textLength="19.80" lengthAdjust="spacingAndGlyphs" stroke="#e2e4ea" stroke-width="0.6">Sep</text>
<text x="258.30" y="872.2" font-size="12" fill="#e2e4ea" textLength="19.50" lengthAdjust="spacingAndGlyphs" stroke="#e2e4ea" stroke-width="0.6">Oct</text>
<text x="386.70" y="872.2" font-size="12" fill="#e2e4ea" textLength="20.40" lengthAdjust="spacingAndGlyphs" stroke="#e2e4ea" stroke-width="0.6">Nov</text>
<text x="509.10" y="872.2" font-size="12" fill="#e2e4ea" textLength="20.90" lengthAdjust="spacingAndGlyphs" stroke="#e2e4ea" stroke-width="0.6">Dec</text>
<text x="622.70" y="872.2" font-size="12" fill="#e2e4ea" textLength="27.60" lengthAdjust="spacingAndGlyphs" stroke="#e2e4ea" stroke-width="0.25" font-weight="bold">2024</text>
<text x="748.70" y="872.2" font-size="12" fill="#e2e4ea" textLength="20.10" lengthAdjust="spacingAndGlyphs" stroke="#e2e4ea" stroke-width="0.6">Feb</text>
<text x="865.10" y="872.2" font-size="12" fill="#e2e4ea" textLength="19.90" lengthAdjust="spacingAndGlyphs" stroke="#e2e4ea" stroke-width="0.6">Mar</text>
<text x="982.30" y="872.2" font-size="12" fill="#e2e4ea" textLength="19.20" lengthAdjust="spacingAndGlyphs" stroke="#e2e4ea" stroke-width="0.6">Apr</text>
<text x="1109.70" y="872.2" font-size="12" fill="#e2e4ea" textLength="20.90" lengthAdjust="spacingAndGlyphs" stroke="#e2e4ea" stroke-width="0.6">May</text>
<text x="1239.00" y="872.2" font-size="12" fill="#e2e4ea" textLength="19.10" lengthAdjust="spacingAndGlyphs" stroke="#e2e4ea" stroke-width="0.6">Jun</text>
</g>
<g fill="#d6d8e0">
<path d="M9.8,894 H18 V903.7 H13.6 V898 H9.8 Z"/>
<circle cx="21" cy="896" r="1.7"/>
<path d="M25,894 H30 L25.9,903.7 H20.9 Z"/>
<text x="32.8" y="903.8" font-size="13.2" textLength="70.8" lengthAdjust="spacingAndGlyphs">TradingView</text>
</g>
</g>
</svg></body></html>
